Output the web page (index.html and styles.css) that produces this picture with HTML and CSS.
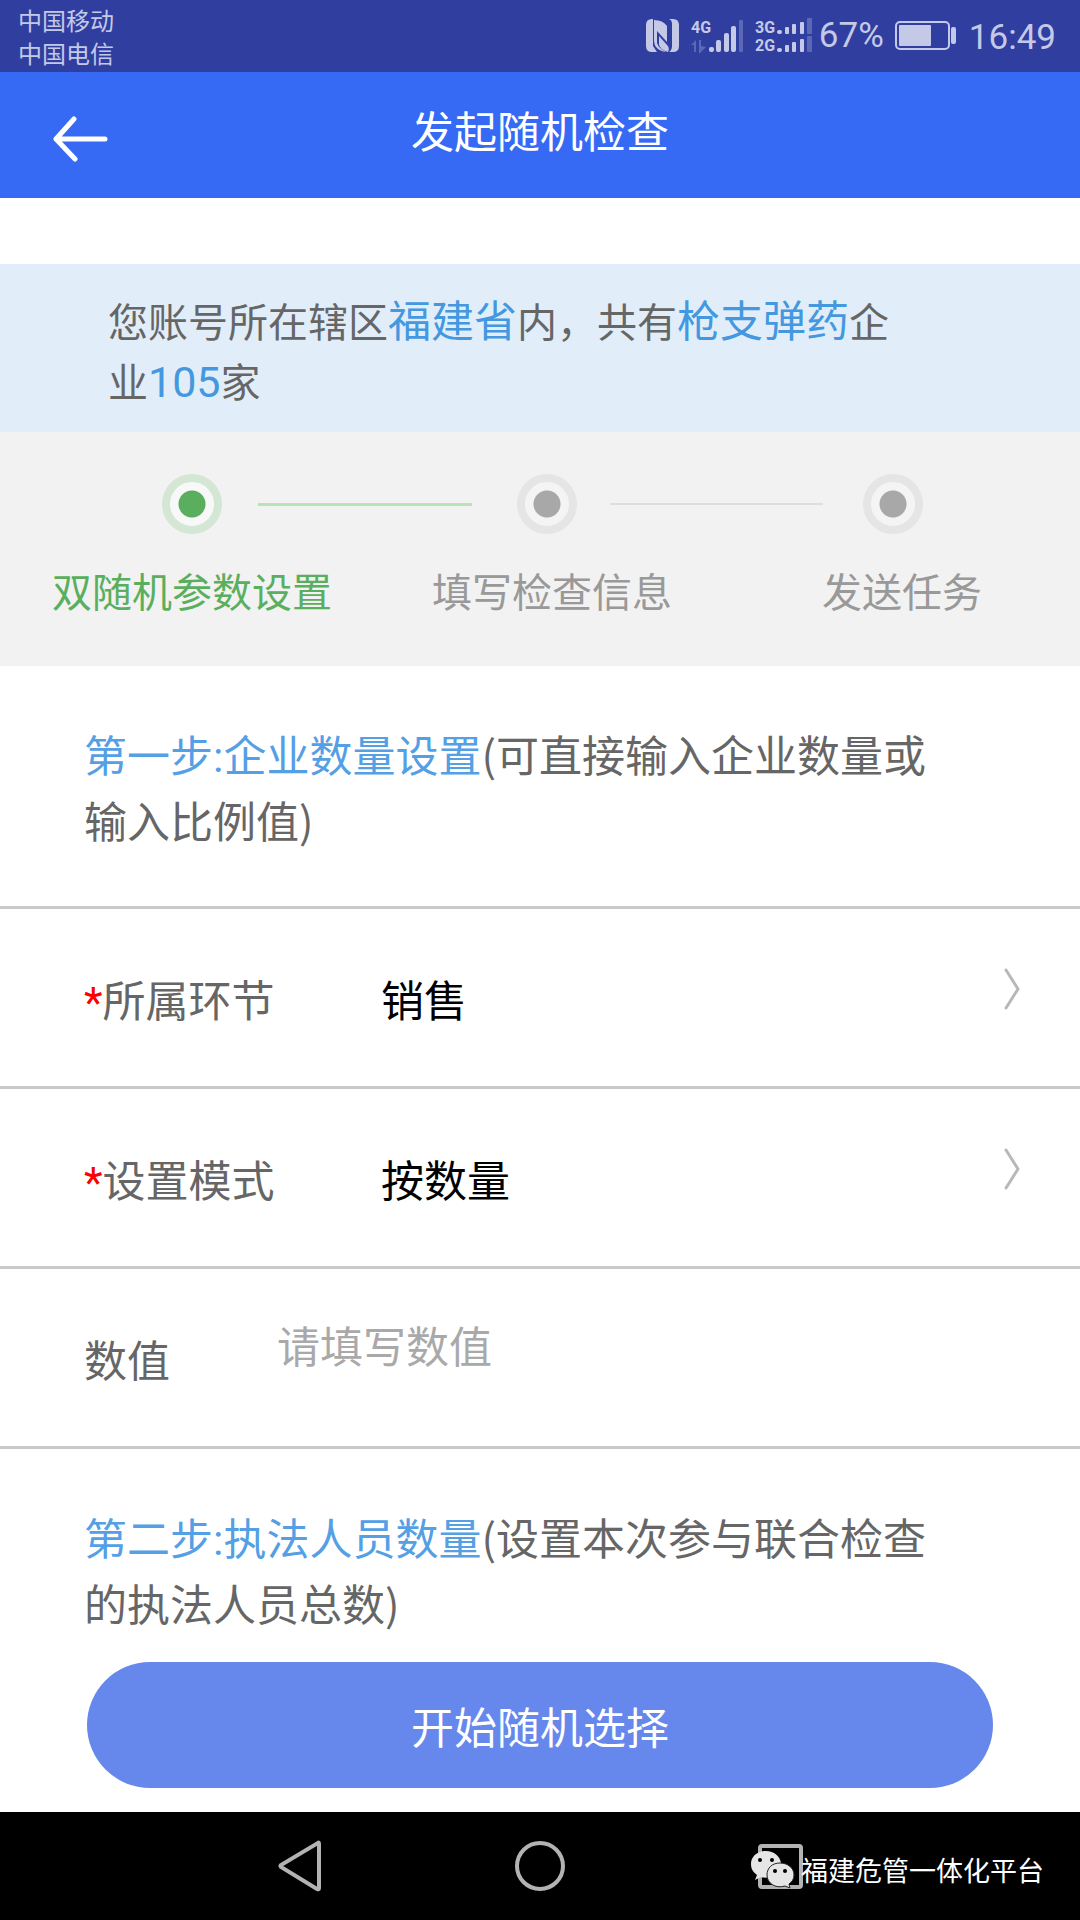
FILE: index.html
```html
<!DOCTYPE html>
<html lang="zh-CN">
<head>
<meta charset="utf-8">
<meta name="viewport" content="width=device-width, initial-scale=1">
<title>发起随机检查</title>
<link rel="stylesheet" href="styles.css">
</head>
<body>
<div class="status-bar">
  <div class="carriers"><span>中国移动</span><span>中国电信</span></div>
  <div class="indicators">
    <svg class="nfc" width="34" height="34" viewBox="0 0 34 34" aria-hidden="true">
      <path d="M6 0H7V27L11 33H6Q0 33 0 27V6Q0 0 6 0Z"/>
      <path d="M8 1Q17 1 21 7V23L11 12V24Q13 30 20 33Q8 31 8 21Z"/>
      <path d="M23 0H27Q33 0 33 6V27Q33 33 27 33H23Q26 31 26 27V5Q26 1 23 0Z"/>
      <path d="M13 17L21 26Q24 29 22 33Q13 30 13 25Z"/>
    </svg>
    <svg class="signal" width="53" height="36" viewBox="0 0 53 36" aria-hidden="true">
      <text x="0" y="15">4G</text>
      <path class="dim" d="M0 27L5 22V34H3V27ZM8 22H10V28L15 29L9 35H8Z"/>
      <rect x="18" y="29" width="5" height="5" rx="2"/><rect x="25" y="22" width="5" height="12" rx="2"/><rect x="33" y="15" width="5" height="19" rx="2"/><rect x="40" y="8" width="5" height="26" rx="2"/>
      <rect class="dim" x="48" y="2" width="4" height="32" rx="1"/>
    </svg>
    <svg class="signal dual" width="58" height="36" viewBox="0 0 58 36" aria-hidden="true">
      <text x="0" y="15">3G</text><text x="0" y="33">2G</text>
      <rect x="22" y="12" width="5" height="4" rx="2"/><rect x="30" y="9" width="4" height="7" rx="1"/><rect x="37" y="6" width="4" height="10" rx="1"/><rect x="45" y="4" width="4" height="12" rx="1"/>
      <rect x="22" y="30" width="5" height="4" rx="2"/><rect x="30" y="27" width="4" height="7" rx="1"/><rect x="37" y="24" width="4" height="10" rx="1"/><rect x="45" y="21" width="4" height="13" rx="1"/>
      <rect class="dim" x="52" y="0" width="5" height="16" rx="1"/><rect class="dim" x="52" y="18" width="5" height="16" rx="1"/>
    </svg>
    <span class="percent">67%</span>
    <svg class="battery" width="62" height="30" viewBox="0 0 62 30" aria-hidden="true">
      <rect class="shell" x="1" y="1" width="53" height="27" rx="4"/>
      <rect x="4" y="4" width="32" height="21" rx="1"/><rect x="56" y="6" width="5" height="17" rx="2"/>
    </svg>
    <time class="clock">16:49</time>
  </div>
</div>

<header class="app-header">
  <button class="back" type="button" aria-label="返回">
    <svg width="56" height="46" viewBox="0 0 56 46" aria-hidden="true"><path d="M22 3L4 23L23 43M4 23H53"/></svg>
  </button>
  <h1>发起随机检查</h1>
</header>

<main>
  <p class="notice">您账号所在辖区<em>福建省</em>内，共有<em>枪支弹药</em>企业<em>105</em>家</p>

  <section class="steps" aria-label="步骤">
    <div class="track">
      <i class="dot active"></i><i class="line active"></i><i class="dot"></i><i class="line"></i><i class="dot"></i>
    </div>
    <ol class="labels"><li class="active">双随机参数设置</li><li>填写检查信息</li><li>发送任务</li></ol>
  </section>

  <form class="form">
    <h2 class="section-title"><em>第一步:企业数量设置</em>(可直接输入企业数量或输入比例值)</h2>
    <div class="row">
      <label for="link"><b>*</b>所属环节</label>
      <select id="link"><option>销售</option></select>
      <svg class="chevron" width="18" height="42" viewBox="0 0 18 42" aria-hidden="true"><path d="M3 2L15 21L3 40"/></svg>
    </div>
    <div class="row">
      <label for="mode"><b>*</b>设置模式</label>
      <select id="mode"><option>按数量</option></select>
      <svg class="chevron" width="18" height="42" viewBox="0 0 18 42" aria-hidden="true"><path d="M3 2L15 21L3 40"/></svg>
    </div>
    <div class="row value-row">
      <label for="value">数值</label>
      <input id="value" type="text" inputmode="numeric" placeholder="请填写数值">
    </div>
    <h2 class="section-title"><em>第二步:执法人员数量</em>(设置本次参与联合检查的执法人员总数)</h2>
    <button class="submit" type="button">开始随机选择</button>
  </form>
</main>

<nav class="nav-bar" aria-label="系统导航">
  <button type="button" aria-label="后退"><svg width="50" height="54" viewBox="0 0 50 54" aria-hidden="true"><path d="M43 4Q44 3 44 5V49Q44 51 42 50L6 28Q5 27 6 26Z"/></svg></button>
  <button type="button" aria-label="主页"><svg width="54" height="54" viewBox="0 0 54 54" aria-hidden="true"><circle cx="27" cy="27" r="23"/></svg></button>
  <button type="button" aria-label="最近任务"><svg width="54" height="54" viewBox="0 0 54 54" aria-hidden="true"><rect x="7" y="7" width="41" height="41" rx="2"/></svg></button>
  <div class="watermark">
    <svg width="50" height="40" viewBox="0 0 50 40" aria-hidden="true">
      <path class="bubble" d="M15 1C6 1 0 7 0 14C0 19 2 22 6 25L4 30L10 27C13 28 16 28 19 27L30 13C29 6 23 1 15 1Z"/>
      <path class="bubble front" d="M29 13C37 13 43 18 43 25C43 29 41 32 38 34L39 38L34 36C24 39 16 33 16 25C16 18 21 13 29 13Z"/>
      <circle cx="9" cy="10" r="2"/><circle cx="21" cy="10" r="2"/><circle cx="24" cy="21" r="2"/><circle cx="34" cy="21" r="2"/>
    </svg>
    <span>福建危管一体化平台</span>
  </div>
</nav>
</body>
</html>
```

FILE: styles.css
```css
* { box-sizing: border-box; }

body {
  margin: 0;
  min-height: 100vh;
  display: flex;
  flex-direction: column;
  background: #fff;
  color: #666;
  font-family: "Noto Sans CJK SC", sans-serif;
  font-size: 43px;
  line-height: 66px;
}

h1, h2, p, ol { margin: 0; padding: 0; font-size: inherit; font-weight: 400; }
em, i, b { font-style: normal; font-weight: 400; }
em, b { font-family: Roboto, "Noto Sans CJK SC", sans-serif; line-height: 40px; }
button, select, input { font: inherit; border: 0; padding: 0; background: none; }

/* Status bar */
.status-bar {
  height: 72px;
  padding: 0 24px 0 18px;
  display: flex;
  justify-content: space-between;
  background: #303f9f;
  color: #c4c9e8;
}
.carriers {
  display: flex;
  flex-direction: column;
  padding-top: 3px;
  font-size: 24px;
  line-height: 33px;
}
.indicators {
  display: flex;
  align-items: center;
  font-family: Roboto, sans-serif;
  font-size: 35px;
  line-height: 70px;
  fill: #c4c9e8;
}
.nfc { margin-right: 11px; }
.signal { margin-right: 11px; font: bold 16px Roboto, sans-serif; }
.dual { margin-right: 6px; }
.dim { fill: #5c68b5; }
.percent { margin-right: 11px; }
.battery { margin-right: 12px; }
.clock { padding-top: 3px; }
.shell { fill: none; stroke: #c4c9e8; stroke-width: 2; }

/* Header */
.app-header {
  height: 126px;
  padding: 0 52px 12px;
  display: grid;
  grid-template-columns: 1fr auto 1fr;
  align-items: center;
  background: #366af4;
  color: #fff;
}
.back { justify-self: start; height: 46px; margin-top: 20px; }
.back svg { display: block; fill: none; stroke: #fff; stroke-width: 5; stroke-linecap: round; stroke-linejoin: round; }

main { padding-top: 66px; flex: 1; }
.notice {
  padding: 26px 180px 22px 108px;
  background: #e1eefa;
  font-size: 40px;
  line-height: 60px;
}
.notice em { color: #4398e0; font-size: 43px; }

/* Steps */
.steps { padding-top: 42px; padding-bottom: 46px; background: #f2f2f2; }
.track { display: flex; align-items: center; padding: 0 157px 0 162px; }
.dot {
  width: 60px;
  height: 60px;
  border: 8px solid #e5e5e5;
  border-radius: 50%;
  background: radial-gradient(circle, #a8a8a8 13px, #f4f4f4 14px);
}
.dot.active { border-color: #d3e7d4; background: radial-gradient(circle, #5aaf5e 13px, #f8f8f8 14px); }
.line { flex: 1; height: 2px; margin: 0 40px 0 33px; background: #dedede; }
.line.active { height: 3px; margin: 0 45px 0 36px; background: #b7e3b5; }
.labels {
  display: flex;
  gap: 100px;
  padding-left: 52px;
  margin-top: 26px;
  list-style: none;
  color: #999;
  font-size: 40px;
  line-height: 60px;
}
.labels li { white-space: nowrap; }
.labels li:last-child { margin-left: 50px; }
.labels .active { color: #5aaf5e; }

/* Form */
.section-title { padding: 54px 130px 54px 84px; }
.section-title em { color: #559fe5; }
.row {
  display: grid;
  grid-template-columns: 297px 1fr 18px;
  align-items: center;
  height: 180px;
  padding: 0 59px 0 84px;
  border-top: 3px solid #c9c9c9;
}
.row label { white-space: nowrap; }
.row b { color: #f00; }
.row select { appearance: none; height: 66px; color: #000; outline: none; }
.chevron { margin-bottom: 18px; fill: none; stroke: #b8b8b8; stroke-width: 3; stroke-linecap: round; stroke-linejoin: round; }
.value-row { grid-template-columns: 193px 1fr; border-bottom: 3px solid #c9c9c9; height: 183px; }
.value-row input { width: 100%; height: 66px; margin-bottom: 28px; color: #000; outline: none; }
.value-row input::placeholder { color: #a9a9a9; opacity: 1; }
.value-row + .section-title { padding-bottom: 27px; }
.submit {
  display: block;
  width: calc(100% - 174px);
  height: 126px;
  margin: 0 auto 24px;
  border-radius: 63px;
  background: #6688ec;
  color: #fff;
}

/* Navigation bar */
.nav-bar {
  position: relative;
  height: 108px;
  display: grid;
  grid-template-columns: repeat(3, 1fr);
  place-items: center;
  padding: 0 180px;
  background: #000;
}
.nav-bar button { height: 54px; }
.nav-bar button svg { display: block; fill: none; stroke: #b3b3b3; stroke-width: 4; }
.watermark {
  position: absolute;
  right: 36px;
  top: 38px;
  display: flex;
  align-items: center;
  color: #fff;
  font-size: 27px;
  line-height: 40px;
}
.bubble { fill: #e6e6e6; }
.front { stroke: #222; stroke-width: 1; }
```
